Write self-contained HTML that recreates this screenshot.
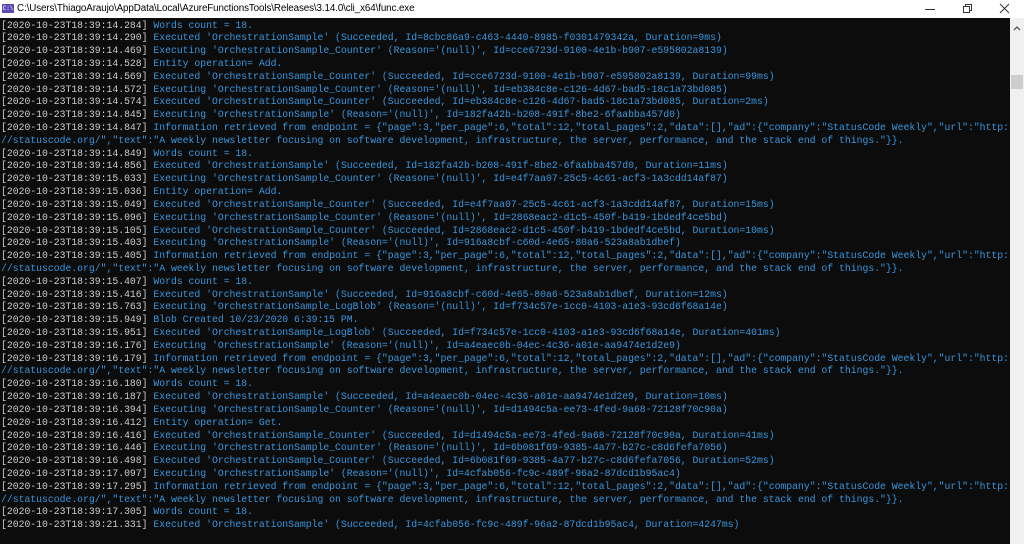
<!DOCTYPE html>
<html><head><meta charset="utf-8"><style>
body{margin:0;width:1024px;height:544px;overflow:hidden;background:#fff;font-family:"Liberation Sans",sans-serif}
.title{position:absolute;left:0;top:0;width:1024px;height:18px;background:#fff;font-size:9.8px;color:#000}
.title .t{position:absolute;left:17px;top:3px;letter-spacing:-0.1px}
.icon{position:absolute;left:2px;top:4px;width:12px;height:9px;background:#5b4bb0;color:#fff;font-size:6px;line-height:9px;text-align:center;font-family:"Liberation Mono",monospace}
.con{position:absolute;left:0;top:18px;width:1010px;height:526px;background:#0c0c0c}
.sb{position:absolute;left:1010px;top:18px;width:14px;height:526px;background:#f0f0f0}
.thumb{position:absolute;left:1011px;top:75px;width:12px;height:14px;background:#cdcdcd}
.lines{position:absolute;left:1px;top:19.5px;font-family:"Liberation Mono",monospace;font-size:9.78px;line-height:12.82px;white-space:pre;color:#3a96dd}
.g{color:#cccccc}
</style></head><body>
<div class="title"><div class="icon">C:\</div><span class="t">C:\Users\ThiagoAraujo\AppData\Local\AzureFunctionsTools\Releases\3.14.0\cli_x64\func.exe</span>
<svg style="position:absolute;left:920px;top:3px" width="100" height="12"><line x1="5" y1="6.5" x2="15" y2="6.5" stroke="#333"/><rect x="43.5" y="3.5" width="6" height="6" fill="none" stroke="#333"/><path d="M45.5 3.5V1.5h6v6h-2" fill="none" stroke="#333"/><path d="M80 1l9 9M89 1l-9 9" stroke="#333"/></svg></div>
<div class="con"></div><div class="sb"><svg width="14" height="14" style="position:absolute;top:4px"><path d="M4 8l3-3 3 3" fill="none" stroke="#555" stroke-width="1.3"/></svg></div><div class="thumb"></div>
<div class="lines"><span class="g">[2020-10-23T18:39:14.284]</span> Words count = 18.
<span class="g">[2020-10-23T18:39:14.290]</span> Executed 'OrchestrationSample' (Succeeded, Id=8cbc86a9-c463-4440-8985-f0301479342a, Duration=9ms)
<span class="g">[2020-10-23T18:39:14.469]</span> Executing 'OrchestrationSample_Counter' (Reason='(null)', Id=cce6723d-9100-4e1b-b907-e595802a8139)
<span class="g">[2020-10-23T18:39:14.528]</span> Entity operation= Add.
<span class="g">[2020-10-23T18:39:14.569]</span> Executed 'OrchestrationSample_Counter' (Succeeded, Id=cce6723d-9100-4e1b-b907-e595802a8139, Duration=99ms)
<span class="g">[2020-10-23T18:39:14.572]</span> Executing 'OrchestrationSample_Counter' (Reason='(null)', Id=eb384c8e-c126-4d67-bad5-18c1a73bd085)
<span class="g">[2020-10-23T18:39:14.574]</span> Executed 'OrchestrationSample_Counter' (Succeeded, Id=eb384c8e-c126-4d67-bad5-18c1a73bd085, Duration=2ms)
<span class="g">[2020-10-23T18:39:14.845]</span> Executing 'OrchestrationSample' (Reason='(null)', Id=182fa42b-b208-491f-8be2-6faabba457d0)
<span class="g">[2020-10-23T18:39:14.847]</span> Information retrieved from endpoint = {"page":3,"per_page":6,"total":12,"total_pages":2,"data":[],"ad":{"company":"StatusCode Weekly","url":"http:
//statuscode.org/","text":"A weekly newsletter focusing on software development, infrastructure, the server, performance, and the stack end of things."}}.
<span class="g">[2020-10-23T18:39:14.849]</span> Words count = 18.
<span class="g">[2020-10-23T18:39:14.856]</span> Executed 'OrchestrationSample' (Succeeded, Id=182fa42b-b208-491f-8be2-6faabba457d0, Duration=11ms)
<span class="g">[2020-10-23T18:39:15.033]</span> Executing 'OrchestrationSample_Counter' (Reason='(null)', Id=e4f7aa07-25c5-4c61-acf3-1a3cdd14af87)
<span class="g">[2020-10-23T18:39:15.036]</span> Entity operation= Add.
<span class="g">[2020-10-23T18:39:15.049]</span> Executed 'OrchestrationSample_Counter' (Succeeded, Id=e4f7aa07-25c5-4c61-acf3-1a3cdd14af87, Duration=15ms)
<span class="g">[2020-10-23T18:39:15.096]</span> Executing 'OrchestrationSample_Counter' (Reason='(null)', Id=2868eac2-d1c5-450f-b419-1bdedf4ce5bd)
<span class="g">[2020-10-23T18:39:15.105]</span> Executed 'OrchestrationSample_Counter' (Succeeded, Id=2868eac2-d1c5-450f-b419-1bdedf4ce5bd, Duration=10ms)
<span class="g">[2020-10-23T18:39:15.403]</span> Executing 'OrchestrationSample' (Reason='(null)', Id=916a8cbf-c60d-4e65-80a6-523a8ab1dbef)
<span class="g">[2020-10-23T18:39:15.405]</span> Information retrieved from endpoint = {"page":3,"per_page":6,"total":12,"total_pages":2,"data":[],"ad":{"company":"StatusCode Weekly","url":"http:
//statuscode.org/","text":"A weekly newsletter focusing on software development, infrastructure, the server, performance, and the stack end of things."}}.
<span class="g">[2020-10-23T18:39:15.407]</span> Words count = 18.
<span class="g">[2020-10-23T18:39:15.416]</span> Executed 'OrchestrationSample' (Succeeded, Id=916a8cbf-c60d-4e65-80a6-523a8ab1dbef, Duration=12ms)
<span class="g">[2020-10-23T18:39:15.763]</span> Executing 'OrchestrationSample_LogBlob' (Reason='(null)', Id=f734c57e-1cc0-4103-a1e3-93cd6f68a14e)
<span class="g">[2020-10-23T18:39:15.949]</span> Blob Created 10/23/2020 6:39:15 PM.
<span class="g">[2020-10-23T18:39:15.951]</span> Executed 'OrchestrationSample_LogBlob' (Succeeded, Id=f734c57e-1cc0-4103-a1e3-93cd6f68a14e, Duration=401ms)
<span class="g">[2020-10-23T18:39:16.176]</span> Executing 'OrchestrationSample' (Reason='(null)', Id=a4eaec0b-04ec-4c36-a01e-aa9474e1d2e9)
<span class="g">[2020-10-23T18:39:16.179]</span> Information retrieved from endpoint = {"page":3,"per_page":6,"total":12,"total_pages":2,"data":[],"ad":{"company":"StatusCode Weekly","url":"http:
//statuscode.org/","text":"A weekly newsletter focusing on software development, infrastructure, the server, performance, and the stack end of things."}}.
<span class="g">[2020-10-23T18:39:16.180]</span> Words count = 18.
<span class="g">[2020-10-23T18:39:16.187]</span> Executed 'OrchestrationSample' (Succeeded, Id=a4eaec0b-04ec-4c36-a01e-aa9474e1d2e9, Duration=10ms)
<span class="g">[2020-10-23T18:39:16.394]</span> Executing 'OrchestrationSample_Counter' (Reason='(null)', Id=d1494c5a-ee73-4fed-9a68-72128f70c90a)
<span class="g">[2020-10-23T18:39:16.412]</span> Entity operation= Get.
<span class="g">[2020-10-23T18:39:16.416]</span> Executed 'OrchestrationSample_Counter' (Succeeded, Id=d1494c5a-ee73-4fed-9a68-72128f70c90a, Duration=41ms)
<span class="g">[2020-10-23T18:39:16.446]</span> Executing 'OrchestrationSample_Counter' (Reason='(null)', Id=6b081f69-9385-4a77-b27c-c8d6fefa7056)
<span class="g">[2020-10-23T18:39:16.498]</span> Executed 'OrchestrationSample_Counter' (Succeeded, Id=6b081f69-9385-4a77-b27c-c8d6fefa7056, Duration=52ms)
<span class="g">[2020-10-23T18:39:17.097]</span> Executing 'OrchestrationSample' (Reason='(null)', Id=4cfab056-fc9c-489f-96a2-87dcd1b95ac4)
<span class="g">[2020-10-23T18:39:17.295]</span> Information retrieved from endpoint = {"page":3,"per_page":6,"total":12,"total_pages":2,"data":[],"ad":{"company":"StatusCode Weekly","url":"http:
//statuscode.org/","text":"A weekly newsletter focusing on software development, infrastructure, the server, performance, and the stack end of things."}}.
<span class="g">[2020-10-23T18:39:17.305]</span> Words count = 18.
<span class="g">[2020-10-23T18:39:21.331]</span> Executed 'OrchestrationSample' (Succeeded, Id=4cfab056-fc9c-489f-96a2-87dcd1b95ac4, Duration=4247ms)</div>
</body></html>
